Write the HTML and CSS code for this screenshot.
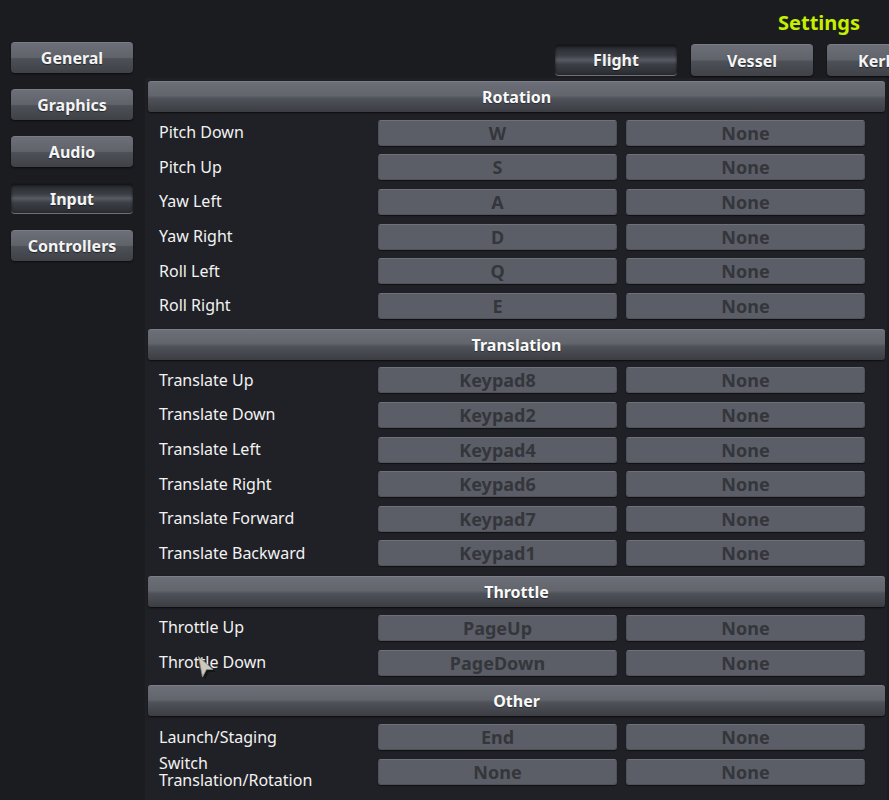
FILE: index.html
```html
<!DOCTYPE html>
<html>
<head>
<meta charset="utf-8">
<link rel="stylesheet" href="styles.css">
</head>
<body>
<div class="page">
  <nav class="sidebar">
    <div class="btn">General</div>
    <div class="btn">Graphics</div>
    <div class="btn">Audio</div>
    <div class="btn pressed">Input</div>
    <div class="btn">Controllers</div>
  </nav>
  <main class="main">
    <div class="titlebar"><span class="title">Settings</span></div>
    <div class="tabs">
      <div class="btn tab pressed">Flight</div>
      <div class="btn tab">Vessel</div>
      <div class="btn tab">Kerbals</div>
    </div>
    <div class="panel">
      <section class="group">
        <div class="header">Rotation</div>
        <div class="row"><span class="label">Pitch Down</span><span class="key">W</span><span class="key">None</span></div>
        <div class="row"><span class="label">Pitch Up</span><span class="key">S</span><span class="key">None</span></div>
        <div class="row"><span class="label">Yaw Left</span><span class="key">A</span><span class="key">None</span></div>
        <div class="row"><span class="label">Yaw Right</span><span class="key">D</span><span class="key">None</span></div>
        <div class="row"><span class="label">Roll Left</span><span class="key">Q</span><span class="key">None</span></div>
        <div class="row"><span class="label">Roll Right</span><span class="key">E</span><span class="key">None</span></div>
      </section>
      <section class="group">
        <div class="header">Translation</div>
        <div class="row"><span class="label">Translate Up</span><span class="key">Keypad8</span><span class="key">None</span></div>
        <div class="row"><span class="label">Translate Down</span><span class="key">Keypad2</span><span class="key">None</span></div>
        <div class="row"><span class="label">Translate Left</span><span class="key">Keypad4</span><span class="key">None</span></div>
        <div class="row"><span class="label">Translate Right</span><span class="key">Keypad6</span><span class="key">None</span></div>
        <div class="row"><span class="label">Translate Forward</span><span class="key">Keypad7</span><span class="key">None</span></div>
        <div class="row"><span class="label">Translate Backward</span><span class="key">Keypad1</span><span class="key">None</span></div>
      </section>
      <section class="group">
        <div class="header">Throttle</div>
        <div class="row"><span class="label">Throttle Up</span><span class="key">PageUp</span><span class="key">None</span></div>
        <div class="row"><span class="label">Throttle Down</span><span class="key">PageDown</span><span class="key">None</span></div>
      </section>
      <section class="group">
        <div class="header">Other</div>
        <div class="row"><span class="label">Launch/Staging</span><span class="key">End</span><span class="key">None</span></div>
        <div class="row"><span class="label two">Switch<br>Translation/Rotation</span><span class="key">None</span><span class="key">None</span></div>
      </section>
    </div>
  </main>
</div>
<svg class="cursor" width="20" height="26" viewBox="0 0 20 26">
  <path d="M2.5 2.5 L17 15.5 L10.5 15.5 L6.5 23 Z" fill="#000" opacity="0.35" transform="translate(1.5,1.5)"/>
  <path d="M1.5 1.5 L16 14.5 L9.5 14.5 L5.5 22 Z" fill="#c9c9bf" stroke="#8e8e86" stroke-width="0.8"/>
</svg>
</body>
</html>
```
FILE: styles.css
```css
html, body {
  margin: 0;
  padding: 0;
  background: #1b1c20;
  width: 889px;
  height: 800px;
  overflow: hidden;
  font-family: "Noto Sans", "Open Sans", sans-serif;
  color: #ffffff;
}

.page {
  display: grid;
  grid-template-columns: 145px 744px;
  height: 800px;
}

.sidebar {
  display: flex;
  flex-direction: column;
  gap: 16px;
  padding: 42px 0 0 11px;
}

.btn {
  box-sizing: border-box;
  width: 122px;
  height: 31px;
  display: flex;
  align-items: center;
  justify-content: center;
  font-weight: 700;
  font-size: 16px;
  color: #f4f4f4;
  border-radius: 4px;
  background: linear-gradient(#6c6f77 0%, #60636a 48%, #4d5057 52%, #3f4147 100%);
  border-top: 1px solid #7a7d85;
  box-shadow: 0 1px 2px rgba(0, 0, 0, 0.6);
  text-shadow: 0 1px 1px rgba(0, 0, 0, 0.5);
}

.btn.pressed {
  background: linear-gradient(#25272c 0%, #3b3e45 35%, #575a62 50%, #3b3e45 65%, #2a2c31 100%);
  border-top: 1px solid #17181b;
  border-bottom: 1px solid #6d7078;
  box-shadow: inset 0 1px 3px rgba(0, 0, 0, 0.7);
}

.main {
  display: flex;
  flex-direction: column;
  overflow: hidden;
}

.titlebar {
  height: 44px;
  display: flex;
  justify-content: flex-end;
  align-items: center;
  padding-right: 29px;
}

.title {
  color: #c6f000;
  font-weight: 700;
  font-size: 20px;
}

.tabs {
  display: flex;
  gap: 14px;
  padding-left: 410px;
  height: 32px;
  white-space: nowrap;
}

.tab {
  flex: 0 0 auto;
  height: 32px;
}

.panel {
  margin-top: 2px;
  margin-right: 2px;
  background: #202126;
  padding: 3px 2px 0 3px;
  flex: 1;
  display: flex;
  flex-direction: column;
  gap: 5.5px;
}

.header {
  box-sizing: border-box;
  height: 31px;
  display: flex;
  align-items: center;
  justify-content: center;
  font-weight: 700;
  font-size: 16px;
  color: #fafafa;
  border-radius: 3px;
  background: linear-gradient(#6c6f77 0%, #62656c 45%, #4f5259 55%, #3b3d43 100%);
  border-top: 1px solid #7b7e86;
  box-shadow: 0 1px 2px rgba(0, 0, 0, 0.7);
  margin-bottom: 3.5px;
  text-shadow: 0 1px 1px rgba(0, 0, 0, 0.4);
}

.row {
  display: grid;
  grid-template-columns: 221px 239px 239px;
  column-gap: 9px;
  align-items: center;
  height: 34.6px;
}

.label {
  padding-left: 11px;
  font-size: 16px;
  line-height: 17px;
  color: #f2f2f2;
}

.label.two {
  line-height: 16.5px;
}

.key {
  box-sizing: border-box;
  height: 26px;
  display: flex;
  align-items: center;
  justify-content: center;
  background: #5b5e67;
  border: 1px solid #4f5259;
  border-top-color: #6e717a;
  border-radius: 3px;
  font-weight: 700;
  font-size: 18px;
  color: #35363b;
  box-shadow: 0 1px 1px rgba(0, 0, 0, 0.5);
}

.cursor {
  position: absolute;
  left: 197px;
  top: 655px;
}
```
